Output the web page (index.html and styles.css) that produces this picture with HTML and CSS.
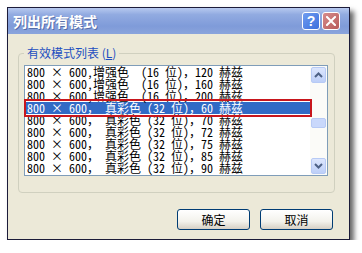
FILE: index.html
```html
<!DOCTYPE html>
<html lang="zh">
<head>
<meta charset="utf-8">
<link rel="stylesheet" href="styles.css">
</head>
<body>
<div class="window">
  <div class="titlebar">
    <span class="title">列出所有模式</span>
    <div class="tbtns">
      <span class="tbtn help">?</span>
      <span class="tbtn close"><svg width="10" height="10" viewBox="0 0 10 10"><path d="M1 1L9 9M9 1L1 9" stroke="#fff" stroke-width="2" stroke-linecap="square"/></svg></span>
    </div>
  </div>
  <div class="body">
    <fieldset class="group">
      <legend class="group-label">有效模式列表 (<u>L</u>)</legend>
      <div class="listbox">
        <ul class="items">
          <li class="item">800 × 600,增强色  (16 位)，120 赫兹</li>
          <li class="item">800 × 600,增强色  (16 位)，160 赫兹</li>
          <li class="item">800 × 600,增强色  (16 位)，200 赫兹</li>
          <li class="item selected">800 × 600， 真彩色 (32 位)，60 赫兹</li>
          <li class="item">800 × 600， 真彩色 (32 位)，70 赫兹</li>
          <li class="item">800 × 600， 真彩色 (32 位)，72 赫兹</li>
          <li class="item">800 × 600， 真彩色 (32 位)，75 赫兹</li>
          <li class="item">800 × 600， 真彩色 (32 位)，85 赫兹</li>
          <li class="item">800 × 600， 真彩色 (32 位)，90 赫兹</li>
        </ul>
        <div class="scrollbar">
          <span class="sbtn"><svg width="9" height="6" viewBox="0 0 9 6"><path d="M1 5L4.5 1.5L8 5" fill="none" stroke="#4d6185" stroke-width="2"/></svg></span>
          <div class="track"><span class="thumb"></span></div>
          <span class="sbtn"><svg width="9" height="6" viewBox="0 0 9 6"><path d="M1 1L4.5 4.5L8 1" fill="none" stroke="#4d6185" stroke-width="2"/></svg></span>
        </div>
        <div class="mark"></div>
      </div>
    </fieldset>
    <div class="actions">
      <button class="btn">确定</button>
      <button class="btn">取消</button>
    </div>
  </div>
</div>
</body>
</html>
```
FILE: styles.css
```css
html, body { margin: 0; padding: 0; background: #fff; }
body { font-family: "Noto Sans CJK SC", "Liberation Sans", sans-serif; font-size: 12px; }
.window {
  margin: 7px 0 0 7px;
  width: 343px;
  height: 233px;
  box-sizing: border-box;
  border: 1px solid #1c1c3a;
  background: #ece9d8;
  box-shadow: 4px 4px 5px rgba(0,0,0,0.6);
  display: flex;
  flex-direction: column;
}
.titlebar {
  height: 26px;
  flex: none;
  background: linear-gradient(#b7c9ef 0%, #92abe1 25%, #7f9bd9 70%, #8aa4dc 100%);
  display: flex;
  align-items: center;
  justify-content: space-between;
  padding: 0 9px 0 5px;
}
.title { color: #fff; font-weight: bold; font-size: 14px; text-shadow: 1px 1px 0 rgba(40,60,120,0.5); }
.tbtns { display: flex; gap: 2px; }
.tbtn {
  width: 18px; height: 18px; box-sizing: border-box;
  border: 1px solid #fff; border-radius: 3px;
  display: flex; align-items: center; justify-content: center;
  color: #fff; font: bold 14px "Liberation Sans", sans-serif;
}
.help { background: linear-gradient(135deg, #6f9cf0, #3d6fdc); }
.close { background: linear-gradient(135deg, #d68c8c, #b85a5a); }
.body { flex: 1; padding: 12px 14px 0 10px; display: flex; flex-direction: column; }
.group {
  margin: 0; padding: 5px 6px 16px 5px;
  border: 1px solid #d0d0bf; border-radius: 4px;
}
.group-label { padding: 0 3px; color: #1d4fc0; font-size: 12px; line-height: 14px; }
.listbox {
  position: relative;
  height: 111px; box-sizing: border-box;
  border: 1px solid #7f9db9; background: #fff;
  display: flex;
}
.items {
  list-style: none; margin: 0; padding: 0; flex: 1;
  font-family: "Noto Sans Mono CJK SC", "Noto Sans CJK SC", monospace;
  font-size: 12px;
}
.item { height: 12px; line-height: 12px; padding-left: 2px; white-space: pre; color: #000; }
.item.selected { background: #316ac5; color: #fff; }
.scrollbar { width: 17px; display: flex; flex-direction: column; background: #fbfbf8; }
.sbtn {
  height: 16px; margin: 1px 1px; box-sizing: border-box;
  border: 1px solid #b7caf5; border-radius: 2px;
  background: linear-gradient(#dce6fd, #bdcff8);
  display: flex; align-items: center; justify-content: center;
}
.track { flex: 1; display: flex; flex-direction: column; padding-top: 34px; }
.thumb { height: 8px; margin: 0 1px; border: 1px solid #b7caf5; border-radius: 2px; background: #c9d8fb; }
.mark {
  position: absolute; left: -1px; top: 33px; width: 288px; height: 18px;
  box-sizing: border-box; border: 2px solid #c8161d;
}
.actions { display: flex; justify-content: flex-end; gap: 10px; margin: 16px 2px 0 0; }
.btn {
  width: 73px; height: 21px; padding: 0;
  border: 1px solid #003c74; border-radius: 3px;
  background: linear-gradient(#fff, #f3f2ec 60%, #d6d0c5);
  font: 12px "Noto Sans CJK SC", sans-serif; color: #000;
}
```
